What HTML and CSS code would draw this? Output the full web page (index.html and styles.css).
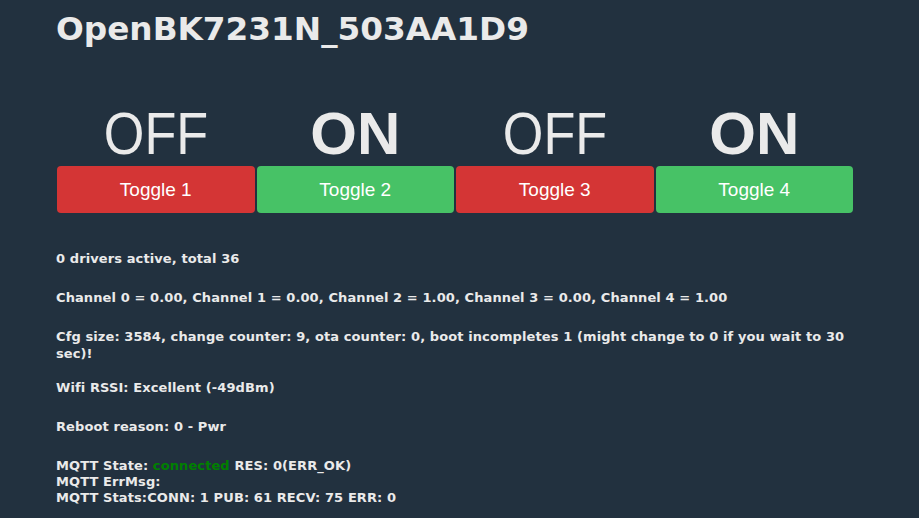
FILE: index.html
```html
<!DOCTYPE html>
<html lang="en">
<head>
    <meta charset="UTF-8">
    <title>OpenBK7231N_503AA1D9</title>
    <link rel="stylesheet" href="styles.css">
</head>
<body>
    <div class="main">
        <h1 class="title">OpenBK7231N_503AA1D9</h1>

        <div class="toggles">
            <div class="toggle">
                <div class="state off"><span>OFF</span></div>
                <button class="btn red">Toggle 1</button>
            </div>
            <div class="toggle">
                <div class="state on">ON</div>
                <button class="btn green">Toggle 2</button>
            </div>
            <div class="toggle">
                <div class="state off"><span>OFF</span></div>
                <button class="btn red">Toggle 3</button>
            </div>
            <div class="toggle">
                <div class="state on">ON</div>
                <button class="btn green">Toggle 4</button>
            </div>
        </div>

        <div class="info">
            <p>0 drivers active, total 36</p>
            <p>Channel 0 = 0.00, Channel 1 = 0.00, Channel 2 = 1.00, Channel 3 = 0.00, Channel 4 = 1.00</p>
            <p class="wrap">Cfg size: 3584, change counter: 9, ota counter: 0, boot incompletes 1 (might change to 0 if you wait to 30 sec)!</p>
            <p>Wifi RSSI: Excellent (-49dBm)</p>
            <p>Reboot reason: 0 - Pwr</p>
            <p>MQTT State: <span class="ok">connected</span> RES: 0(ERR_OK)<br>MQTT ErrMsg: <br>MQTT Stats:CONN: 1 PUB: 61 RECV: 75 ERR: 0</p>
        </div>
    </div>
</body>
</html>
```

FILE: styles.css
```css
body {
    margin: 0;
    background: #22313f;
    color: #eaeaea;
    font-family: "DejaVu Sans", Verdana, sans-serif;
    min-height: 100vh;
}
.main {
    width: 797px;
    padding: 0 0 0 56px;
}
.title {
    font-size: 32.7px;
    font-weight: bold;
    margin: 0;
    padding: 9px 0 0;
    line-height: 40px;
}
.toggles {
    display: grid;
    grid-template-columns: repeat(4, 1fr);
    gap: 2px;
    margin: 50px 0 0 1px;
    width: 796px;
}
.toggle {
    display: flex;
    flex-direction: column;
    align-items: stretch;
}
.state {
    font-family: "Liberation Sans", Arial, sans-serif;
    font-size: 60px;
    line-height: 70px;
    text-align: center;
    margin-bottom: -3px;
}
.state.off span {
    display: inline-block;
    transform: scaleX(0.87);
}
.state.on {
    font-weight: bold;
}
.btn {
    font-family: "Liberation Sans", Arial, sans-serif;
    font-size: 19px;
    color: #fff;
    border: none;
    border-radius: 4px;
    height: 47px;
    cursor: pointer;
}
.btn.red {
    background: #d43535;
}
.btn.green {
    background: #47c266;
}
.info {
    margin-top: 38px;
    font-size: 13px;
    font-weight: bold;
    line-height: 16px;
    letter-spacing: 0.1px;
}
.info p {
    margin: 0 0 23px;
}
.info p.wrap {
    line-height: 17px;
    margin-top: -1px;
    margin-bottom: 18px;
}
.ok {
    color: #008000;
}
```
